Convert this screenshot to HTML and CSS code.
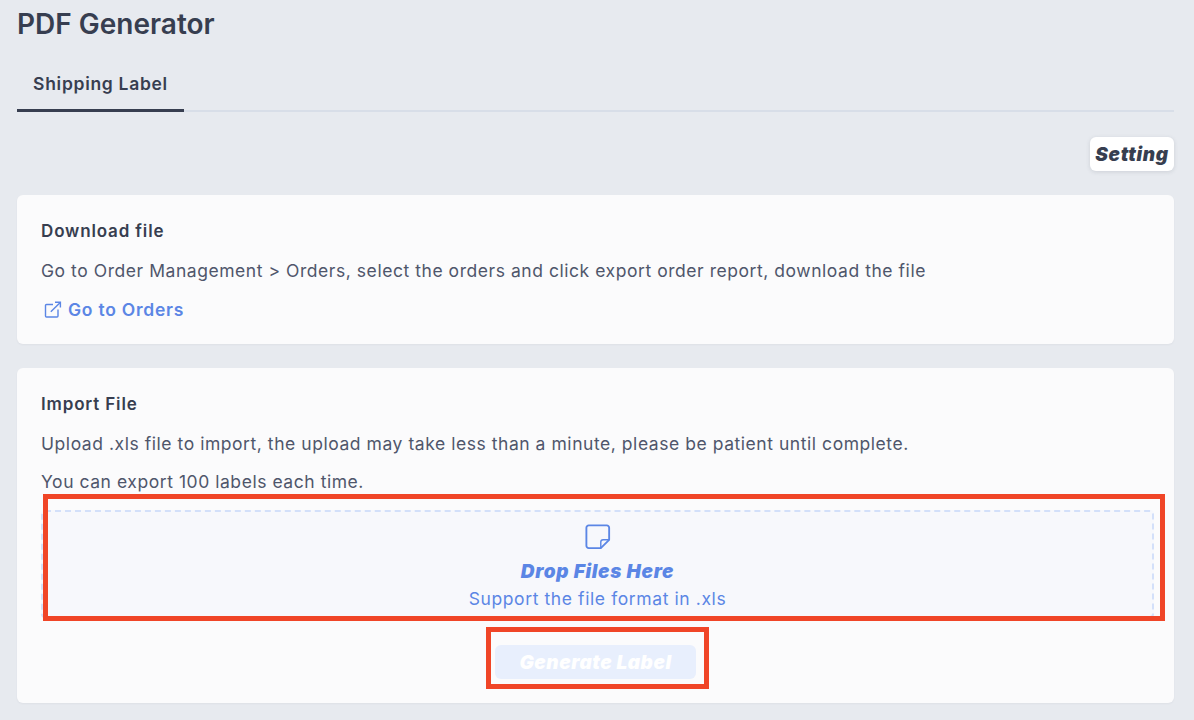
FILE: index.html
```html
<!DOCTYPE html>
<html lang="en">
<head>
	<meta charset="UTF-8">
	<meta name="viewport" content="width=device-width, initial-scale=1.0">
	<title>PDF Generator</title>
	<link rel="stylesheet" href="styles.css">
</head>
<body>
	<div class="page">
		<h1 class="page__title">PDF Generator</h1>
		<div class="tabs">
			<div class="tabs__item">Shipping Label</div>
		</div>
		<div class="toolbar">
			<button class="setting">Setting</button>
		</div>
		<div class="card card--download">
			<h2 class="card__title">Download file</h2>
			<p class="card__text">Go to Order Management &gt; Orders, select the orders and click export order report, download the file</p>
			<a class="link" href="#">
				<svg class="link__icon" width="18" height="18" viewBox="0 0 18 18" fill="none" stroke="currentColor" stroke-width="1.4">
					<path d="M9 3.500H2.500a1 1 0 0 0-1 1V15a1 1 0 0 0 1 1H13a1 1 0 0 0 1-1V8.500"/>
					<path d="M6.800 10.800 16 1.700"/>
					<path d="M11 1.200h5.400v5.400"/>
				</svg>
				Go to Orders
			</a>
		</div>
		<div class="card card--import">
			<h2 class="card__title">Import File</h2>
			<p class="card__text">Upload .xls file to import, the upload may take less than a minute, please be patient until complete.</p>
			<p class="card__text card__text--last">You can export 100 labels each time.</p>
			<div class="drop">
				<svg class="drop__icon" width="26" height="26" viewBox="0 0 28 28" fill="none" stroke="currentColor" stroke-width="2" stroke-linejoin="round">
					<path d="M17 26H4a2.500 2.500 0 0 1-2.500-2.500V4A2.500 2.500 0 0 1 4 1.500h19.500A2.500 2.500 0 0 1 26 4v13z"/>
					<path d="M26 17h-6.500a2.500 2.500 0 0 0-2.500 2.500V26" stroke-width="1.500"/>
				</svg>
				<div class="drop__title">Drop Files Here</div>
				<div class="drop__hint">Support the file format in .xls</div>
				<div class="mark mark--drop"></div>
			</div>
			<div class="actions">
				<button class="generate">Generate Label</button>
				<div class="mark mark--generate"></div>
			</div>
		</div>
	</div>
</body>
</html>
```

FILE: styles.css
```css
*{
	box-sizing: border-box;
}
html,
body{
	margin: 0;
	height: 100%;
}
body{
	background: #e7eaef;
	color: #373e50;
	font-family: Inter, "Noto Sans", sans-serif;
	overflow: hidden;
}
.page{
	padding: 0 20px 0 17px;
}
.page__title{
	margin: 0;
	padding-top: 8px;
	font-size: 28px;
	line-height: 32px;
	font-weight: 600;
}
.tabs{
	margin-top: 32px;
	height: 40px;
	border-bottom: 2px solid #d8dee8;
}
.tabs__item{
	width: 167px;
	height: 40px;
	text-align: center;
	font-size: 17.5px;
	line-height: 24px;
	font-weight: 600;
	letter-spacing: 0.7px;
	border-bottom: 3px solid #373e50;
}
.toolbar{
	display: flex;
	justify-content: flex-end;
	margin-top: 25px;
}
.setting{
	width: 84px;
	height: 34px;
	padding: 1px 0 0;
	border: 0;
	border-radius: 6px;
	background: #fff;
	box-shadow: 0 1px 4px rgba(55, 62, 80, 0.15);
	color: #373e50;
	font-family: inherit;
	font-size: 19px;
	font-weight: 900;
	font-style: italic;
	letter-spacing: 0.7px;
}
.card{
	background: #fbfbfc;
	border-radius: 6px;
	padding: 24px 20px 0 24px;
	box-shadow: 0 1px 2px rgba(55, 62, 80, 0.05);
}
.card--download{
	height: 149px;
	margin-top: 24px;
}
.card--import{
	height: 335px;
	margin-top: 24px;
}
.card__title{
	margin: 0;
	font-size: 17px;
	line-height: 24px;
	font-weight: 600;
	letter-spacing: 0.85px;
}
.card__text{
	margin: 16px 0 0;
	font-size: 17.5px;
	line-height: 24px;
	letter-spacing: 0.55px;
	color: #4f566b;
}
.card__text--last{
	margin-top: 14px;
}
.link{
	display: flex;
	align-items: center;
	gap: 6px;
	margin-top: 15px;
	color: #5b86e5;
	font-size: 17.5px;
	line-height: 24px;
	font-weight: 600;
	letter-spacing: 0.75px;
	text-decoration: none;
}
.link__icon{
	margin-left: 3px;
}
.drop{
	position: relative;
	display: flex;
	flex-direction: column;
	align-items: center;
	height: 108px;
	margin-top: 16px;
	padding-top: 12px;
	background: #f7f8fc;
	border: 2px dashed #d3e0fa;
	border-radius: 4px;
	color: #5b86e5;
}
.drop__title{
	margin-top: 10px;
	font-size: 19px;
	line-height: 24px;
	font-weight: 900;
	font-style: italic;
	letter-spacing: 0.7px;
}
.drop__hint{
	margin-top: 3px;
	font-size: 17.5px;
	line-height: 24px;
	letter-spacing: 0.6px;
}
.actions{
	position: relative;
	display: flex;
	justify-content: center;
	margin-top: 27px;
	padding-right: 4px;
}
.generate{
	width: 201px;
	height: 34px;
	padding: 0;
	border: 0;
	border-radius: 6px;
	background: #e8effd;
	color: #fff;
	font-family: inherit;
	font-size: 19px;
	font-weight: 900;
	font-style: italic;
	letter-spacing: 0.55px;
}
.mark{
	position: absolute;
	border: 5px solid #f04527;
	pointer-events: none;
}
.mark--drop{
	top: -18px;
	left: 0;
	width: 1122px;
	height: 127px;
}
.mark--generate{
	top: -18px;
	left: 445px;
	width: 223px;
	height: 62px;
}
```
